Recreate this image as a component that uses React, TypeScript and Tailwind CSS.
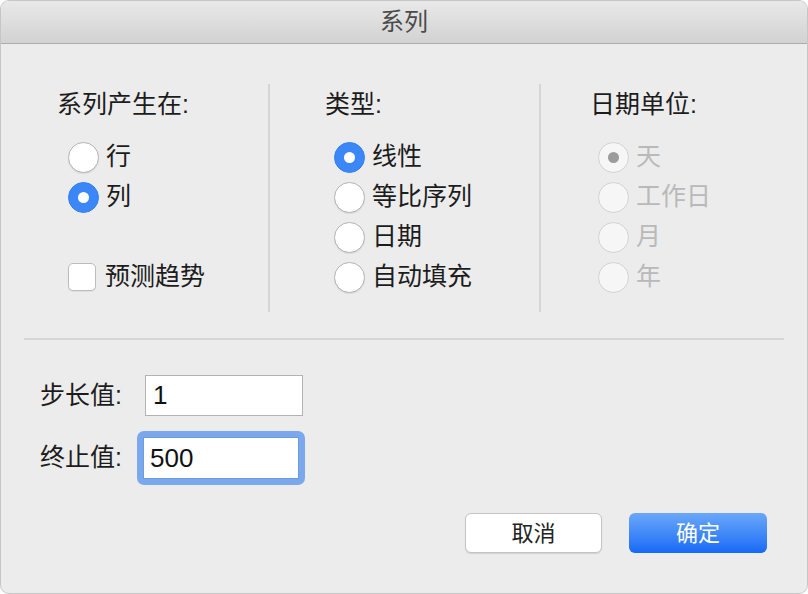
import React from 'react';

const font = { fontFamily: '"Liberation Sans", "Noto Sans CJK SC", "Noto Sans", sans-serif' };

function Radio({ label, checked, disabled }: { label: string; checked?: boolean; disabled?: boolean }) {
  let circle = 'border border-[#b4b4b4] bg-white shadow-[0_1px_1px_rgba(0,0,0,0.08)]';
  if (checked && !disabled) circle = 'bg-[#3b87f7] border border-[#3580ef]';
  if (disabled) circle = 'border border-[#d2d2d2] bg-[#f6f6f6]';
  return (
    <div className="flex items-center h-[40px]">
      <div className={`w-[31px] h-[31px] rounded-full flex items-center justify-center ${circle}`}>
        {checked && <div className={`w-[11px] h-[11px] rounded-full ${disabled ? 'bg-[#9c9c9c]' : 'bg-white'}`} />}
      </div>
      <span className={`ml-[7px] text-[25px] ${disabled ? 'text-[#b9b9b9]' : 'text-[#1c1c1c]'}`}>{label}</span>
    </div>
  );
}

export default function App() {
  return (
    <div className="w-[808px] h-[594px] bg-white" style={font}>
      <div className="w-full h-full rounded-[9px] overflow-hidden bg-[#ececec] border border-[#c6c6c6] flex flex-col">
        <div className="h-[43px] shrink-0 bg-gradient-to-b from-[#e9e9e9] to-[#d2d2d2] border-b border-[#acacac] flex items-center justify-center">
          <span className="text-[24px] text-[#4b4b4b]">系列</span>
        </div>

        <div className="flex items-start pt-[40px]">
          <div className="w-[267px] h-[228px] pl-[56px] pt-[1px]">
            <div className="text-[25px] leading-[38px] text-[#1c1c1c]">系列产生在:</div>
            <div className="mt-[14px] pl-[11px]">
              <Radio label="行" />
              <Radio label="列" checked />
              <div className="h-[40px]" />
              <div className="flex items-center h-[40px]">
                <div className="w-[28px] h-[28px] rounded-[5px] bg-white border border-[#bcbcbc] shadow-[0_1px_1px_rgba(0,0,0,0.06)]" />
                <span className="ml-[9px] text-[25px] text-[#1c1c1c]">预测趋势</span>
              </div>
            </div>
          </div>
          <div className="w-[2px] h-[228px] bg-[#d6d6d6]" />
          <div className="w-[269px] h-[228px] pl-[55px] pt-[1px]">
            <div className="text-[25px] leading-[38px] text-[#1c1c1c]">类型:</div>
            <div className="mt-[14px] pl-[9px]">
              <Radio label="线性" checked />
              <Radio label="等比序列" />
              <Radio label="日期" />
              <Radio label="自动填充" />
            </div>
          </div>
          <div className="w-[2px] h-[228px] bg-[#d6d6d6]" />
          <div className="flex-1 h-[228px] pl-[49px] pt-[1px]">
            <div className="text-[25px] leading-[38px] text-[#1c1c1c]">日期单位:</div>
            <div className="mt-[14px] pl-[8px]">
              <Radio label="天" checked disabled />
              <Radio label="工作日" disabled />
              <Radio label="月" disabled />
              <Radio label="年" disabled />
            </div>
          </div>
        </div>

        <div className="mt-[26px] mx-[23px] h-[2px] bg-[#d6d6d6]" />

        <div className="flex items-center mt-[35px] pl-[39px]">
          <span className="w-[105px] text-[25px] text-[#1c1c1c]">步长值:</span>
          <div className="w-[158px] h-[41px] bg-white border border-[#b3b3b3] flex items-center pl-[7px] text-[26px] text-[#111]">1</div>
        </div>
        <div className="flex items-center mt-[15px] pl-[39px]">
          <span className="w-[97px] text-[25px] text-[#1c1c1c]">终止值:</span>
          <div className="p-[6px] rounded-[7px] bg-[#7ba8ec]">
            <div className="w-[156px] h-[42px] bg-white border border-[#6d9be0] flex items-center pl-[6px] text-[26px] text-[#111]">500</div>
          </div>
        </div>

        <div className="flex justify-end gap-[27px] mt-[28px] pr-[40px]">
          <button className="w-[137px] h-[40px] rounded-[6px] bg-white border border-[#c4c4c4] shadow-[0_1px_1px_rgba(0,0,0,0.12)] text-[22px] text-[#222]">取消</button>
          <button className="w-[138px] h-[40px] rounded-[6px] bg-gradient-to-b from-[#6aa7f9] to-[#1669f6] text-[22px] text-white">确定</button>
        </div>
      </div>
    </div>
  );
}
